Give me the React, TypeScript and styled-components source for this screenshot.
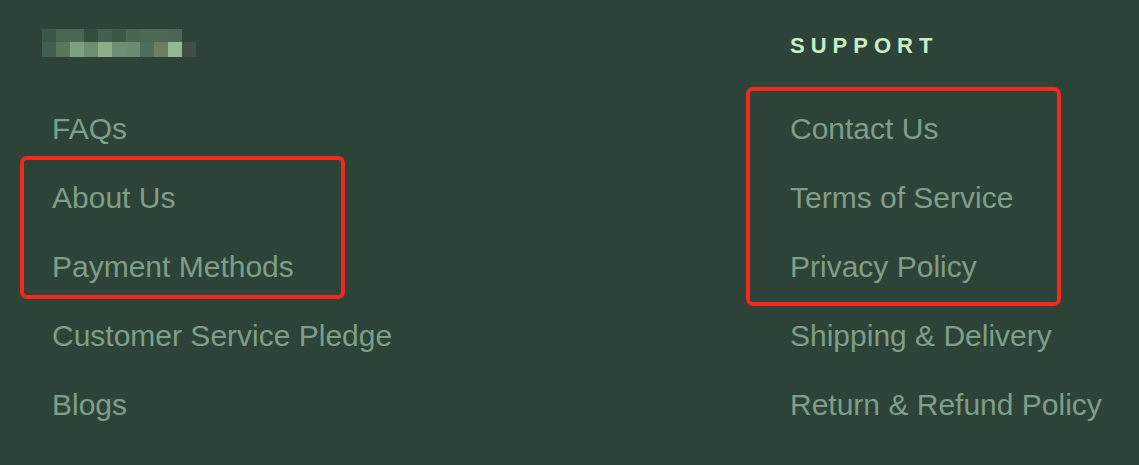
import React from 'react'
import styled, { createGlobalStyle } from 'styled-components'

const GlobalStyle = createGlobalStyle`
  html, body {
    margin: 0;
    padding: 0;
    background: #2d4337;
  }
  body {
    font-family: 'Liberation Sans', Arial, sans-serif;
  }
`

const Footer = styled.footer`
  display: grid;
  grid-template-columns: 738px 1fr;
  height: 465px;
  padding: 33px 0 0 52px;
  box-sizing: border-box;
  background: #2d4337;
  overflow: hidden;
`

const Column = styled.div`
  display: flex;
  flex-direction: column;
`

const HeadingRow = styled.div`
  display: flex;
  align-items: center;
  height: 26px;
  margin-bottom: 35px;
`

const Heading = styled.h3`
  margin: 0;
  font-size: 22px;
  line-height: 26px;
  font-weight: 700;
  letter-spacing: 6px;
  color: #c9ecc9;
  text-transform: uppercase;
`

const LinkList = styled.ul`
  list-style: none;
  margin: 0;
  padding: 0;
`

const LinkItem = styled.li`
  height: 69px;
  display: flex;
  align-items: center;
`

const FooterLink = styled.a`
  font-size: 30px;
  color: #7f9e88;
  text-decoration: none;
  white-space: nowrap;
`

interface HighlightProps {
  $left: number
  $width: number
  $top: number
  $bottom: number
}

const Highlight = styled.div<HighlightProps>`
  position: relative;

  &::after {
    content: '';
    position: absolute;
    top: ${({ $top }) => `${$top}px`};
    bottom: ${({ $bottom }) => `${$bottom}px`};
    left: ${({ $left }) => `${$left}px`};
    width: ${({ $width }) => `${$width}px`};
    border: 4px solid #f4281d;
    border-radius: 7px;
    box-sizing: border-box;
    pointer-events: none;
  }
`

const LogoMark = styled.svg`
  display: block;
  margin: -6px 0 0 -10px;
`

const logoTop = ['#3d5646', '#4b6653', '#4b6653', '#334d3e', '#42604c', '#3d5746', '#4a6552', '#4c6855', '#4c6753', '#4c6653', '#2d4337']
const logoBottom = ['#42604f', '#5d7659', '#7f9f81', '#6f8d73', '#8fad85', '#6e8d74', '#6d8b71', '#4f6d5c', '#6b7f5f', '#94b794', '#3f4f45']

const Logo = () => (
  <LogoMark width="156" height="28" viewBox="0 0 156 28">
    {logoTop.map((c, i) => (
      <rect key={`t${i}`} x={i * 14} y={0} width={14} height={13} fill={c} />
    ))}
    {logoBottom.map((c, i) => (
      <rect key={`b${i}`} x={i * 14} y={13} width={14} height={15} fill={c} />
    ))}
  </LogoMark>
)

const renderLinks = (links: string[]) =>
  links.map((label) => (
    <LinkItem key={label}>
      <FooterLink href="#">{label}</FooterLink>
    </LinkItem>
  ))

const App: React.FC = () => {
  return (
    <>
      <GlobalStyle />
      <Footer>
        <Column>
          <HeadingRow>
            <Logo />
          </HeadingRow>
          <LinkList>
            {renderLinks(['FAQs'])}
            <Highlight $left={-32} $width={325} $top={-7} $bottom={2}>
              {renderLinks(['About Us', 'Payment Methods'])}
            </Highlight>
            {renderLinks(['Customer Service Pledge', 'Blogs'])}
          </LinkList>
        </Column>
        <Column>
          <HeadingRow>
            <Heading>Support</Heading>
          </HeadingRow>
          <LinkList>
            <Highlight $left={-44} $width={315} $top={-7} $bottom={-5}>
              {renderLinks(['Contact Us', 'Terms of Service', 'Privacy Policy'])}
            </Highlight>
            {renderLinks(['Shipping & Delivery', 'Return & Refund Policy'])}
          </LinkList>
        </Column>
      </Footer>
    </>
  )
}

export default App
